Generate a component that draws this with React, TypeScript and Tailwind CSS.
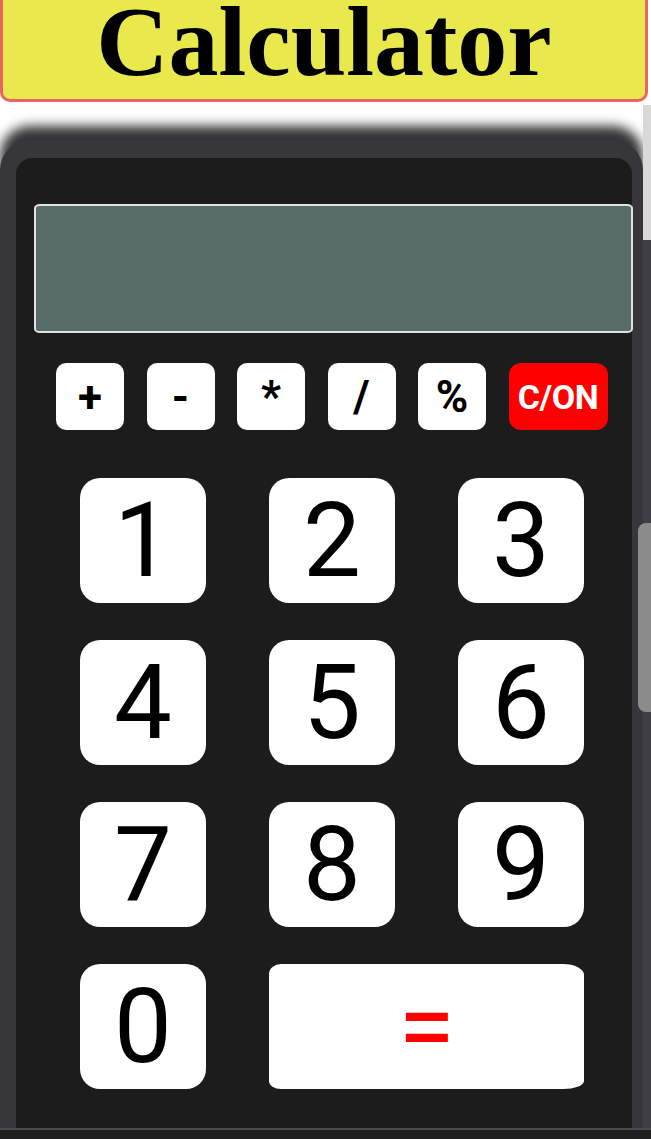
import React from 'react';

const OPERATORS = ['+', '-', '*', '/', '%'];
const DIGITS = ['1', '2', '3', '4', '5', '6', '7', '8', '9'];

const OperatorKey: React.FC<{ label: string }> = ({ label }) => (
  <button className="flex h-[67px] w-[68px] items-center justify-center rounded-[10px] bg-white text-[44px] font-bold leading-none text-black">
    {label}
  </button>
);

const DigitKey: React.FC<{ label: string }> = ({ label }) => (
  <button className="flex h-[125px] w-[126px] items-center justify-center rounded-[20px] bg-white text-[103px] leading-none text-black">
    {label}
  </button>
);

export default function App() {
  return (
    <div className="relative h-[1139px] overflow-hidden bg-white font-['Roboto',sans-serif]">
      {/* title banner, top edge sits above the viewport */}
      <header className="h-[102px] w-[648px] rounded-b-[10px] border-x-[3px] border-b-[3px] border-[#ec6464] bg-[#e9e84d] text-center">
        <h1 className="font-['Liberation_Serif',serif] text-[100px] font-bold leading-[84px] text-black">
          Calculator
        </h1>
      </header>

      {/* calculator shell */}
      <div className="mt-[38px] h-[988px] w-[643px] rounded-t-[30px] bg-[#37363b] pl-[16px] pr-[11px] pt-[18px] shadow-[0_-14px_12px_rgba(0,0,0,0.8)]">
        <div className="h-full rounded-t-[16px] bg-[#1c1c1c] pl-[18px] pt-[46px]">
          <div className="h-[129px] w-[599px] rounded-[6px/4px] border-2 border-[#e2e2e2] bg-[#586d69]" />

          <div className="ml-[22px] mt-[30px] flex gap-[22.5px]">
            {OPERATORS.map((op) => (
              <OperatorKey key={op} label={op} />
            ))}
            <button className="flex h-[67px] w-[99px] items-center justify-center rounded-[12px] bg-[#ff0000] text-[34px] font-bold leading-none tracking-[-0.5px] text-white">
              C/ON
            </button>
          </div>

          <div className="ml-[46px] mt-[48px] grid grid-cols-[126px_126px_126px] gap-x-[63px] gap-y-[37px]">
            {DIGITS.map((d) => (
              <DigitKey key={d} label={d} />
            ))}
            <DigitKey label="0" />
            <button className="col-span-2 flex h-[125px] items-center justify-center rounded-[12px_21px_21px_12px/10px_11px_8px_8px] bg-white text-[103px] leading-none text-[#ff0000]">
              =
            </button>
          </div>
        </div>
      </div>

      {/* browser chrome at the bottom */}
      <div className="h-[11px] border-t-[2px] border-[#4b4b4b] bg-[#1f1f1f]" />

      {/* overlay scrollbar */}
      <div className="absolute left-[643px] top-[105px] h-[135px] w-[8px] bg-[#d9d9d9]" />
      <div className="absolute left-[643px] top-[240px] h-[888px] w-[8px] bg-[#3f3e44]" />
      <div className="absolute left-[638px] top-[523px] h-[189px] w-[13px] rounded-l-[8px] bg-[#8b8b8b]" />
    </div>
  );
}
